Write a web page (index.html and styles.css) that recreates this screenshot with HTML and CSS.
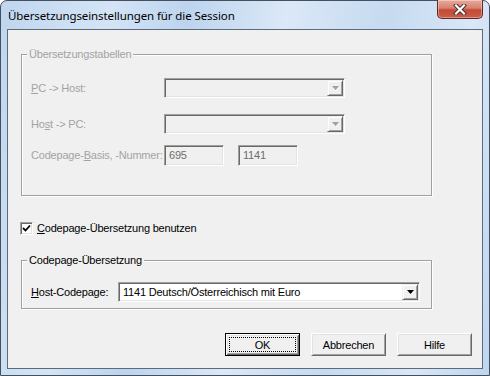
FILE: index.html
```html
<!DOCTYPE html>
<html lang="de">
<head>
    <meta charset="UTF-8">
    <meta name="viewport" content="width=device-width, initial-scale=1.0">
    <title>Übersetzungseinstellungen für die Session</title>
    <link rel="stylesheet" href="styles.css">
</head>
<body>
    <div class="window">
        <div class="titlebar">
            <span class="title">Übersetzungseinstellungen für die Session</span>
            <button class="close" aria-label="Schließen">
                <svg width="14" height="11" viewBox="0 0 14 11">
                    <path d="M3 1.5L11 9.5M11 1.5L3 9.5" stroke="#3c2b2b" stroke-width="4" stroke-linecap="square"/>
                    <path d="M3 1.5L11 9.5M11 1.5L3 9.5" stroke="#ffffff" stroke-width="2.2" stroke-linecap="square"/>
                </svg>
            </button>
        </div>

        <div class="client">
            <div class="group group-tables">
                <div class="group-title disabled">Übersetzungstabellen</div>
                <div class="row row-pc">
                    <span class="field-label disabled"><u>P</u>C -&gt; Host:</span>
                    <div class="combo combo-tables is-disabled">
                        <span class="combo-value"></span>
                        <span class="combo-button">
                            <svg width="7" height="4" viewBox="0 0 7 4"><path d="M0 0H7L3.5 4Z" fill="#a0a0a0"/></svg>
                        </span>
                    </div>
                </div>
                <div class="row row-host">
                    <span class="field-label disabled">Ho<u>s</u>t -&gt; PC:</span>
                    <div class="combo combo-tables is-disabled">
                        <span class="combo-value"></span>
                        <span class="combo-button">
                            <svg width="7" height="4" viewBox="0 0 7 4"><path d="M0 0H7L3.5 4Z" fill="#a0a0a0"/></svg>
                        </span>
                    </div>
                </div>
                <div class="row row-basis">
                    <span class="field-label disabled">Codepage-<u>B</u>asis, -Nummer:</span>
                    <span class="edit is-disabled">695</span>
                    <span class="edit edit-second is-disabled">1141</span>
                </div>
            </div>

            <div class="check-row">
                <span class="checkbox">
                    <svg width="9" height="9" viewBox="0 0 9 9"><path d="M1 4L3.5 6.5L8 1.5" fill="none" stroke="#000" stroke-width="1.8"/></svg>
                </span>
                <span><u>C</u>odepage-Übersetzung benutzen</span>
            </div>

            <div class="group group-codepage">
                <div class="group-title">Codepage-Übersetzung</div>
                <div class="row row-codepage">
                    <span class="field-label label-short"><u>H</u>ost-Codepage:</span>
                    <div class="combo combo-codepage">
                        <span class="combo-value">1141 Deutsch/Österreichisch mit Euro</span>
                        <span class="combo-button">
                            <svg width="7" height="4" viewBox="0 0 7 4"><path d="M0 0H7L3.5 4Z" fill="#000"/></svg>
                        </span>
                    </div>
                </div>
            </div>

            <div class="buttons">
                <button class="btn btn-default">OK</button>
                <button class="btn">Abbrechen</button>
                <button class="btn">Hilfe</button>
            </div>
        </div>
    </div>
</body>
</html>
```

FILE: styles.css
```css
body {
    margin: 0;
    font-family: "Liberation Sans", Arial, sans-serif;
    font-size: 11px;
    letter-spacing: -0.2px;
    background-color: #ffffff;
}
.window {
    width: 490px;
    height: 376px;
    box-sizing: border-box;
    border: 1px solid #44505e;
    border-radius: 7px 7px 0 0;
    padding: 0 6px 6px;
    background: linear-gradient(100deg, #c0d6ee 0%, #d4e4f6 20%, #bdd4ee 34%, #dbe8f7 52%, #c6daf0 70%, #d9e7f7 86%, #bfd5ee 100%);
}
.titlebar {
    height: 28px;
    display: flex;
    justify-content: space-between;
    align-items: flex-start;
}
.title {
    font-family: "Noto Sans", "Open Sans", sans-serif;
    font-size: 11.5px;
    letter-spacing: -0.1px;
    color: #000;
    padding: 7px 0 0 1px;
    line-height: 16px;
}
.close {
    width: 46px;
    height: 19px;
    margin-top: -1px;
    padding: 0;
    border: 1px solid #5d2a28;
    border-top: none;
    border-radius: 0 0 5px 5px;
    background: linear-gradient(#e9a99b 0%, #d8816f 45%, #c24a35 55%, #cc5d48 100%);
    box-shadow: inset 0 0 0 1px rgba(255, 255, 255, 0.35);
    display: flex;
    align-items: center;
    justify-content: center;
}
.client {
    height: 340px;
    box-sizing: border-box;
    border: 1px solid #5c6b7c;
    background-color: #f0f0f0;
    padding: 0 10px 0 13px;
}
.disabled {
    color: #a3a3a3;
}
u {
    text-decoration: underline;
    text-underline-offset: 1px;
}
.group {
    width: 411px;
    box-sizing: border-box;
    border: 1px solid #a0a0a0;
    box-shadow: inset 1px 1px 0 #fff, 1px 1px 0 #fff;
}
.group-tables {
    margin-top: 24px;
    height: 142px;
}
.group-codepage {
    margin-top: 25px;
    height: 49px;
}
.group-title {
    display: inline-block;
    vertical-align: top;
    margin: -7px 0 0 5px;
    padding: 0 2px;
    line-height: 13px;
    background-color: #f0f0f0;
}
.row {
    display: flex;
    align-items: center;
    padding-left: 9px;
}
.row-pc {
    margin-top: 11px;
}
.row-host {
    margin-top: 16px;
}
.row-basis {
    margin-top: 11px;
}
.row-codepage {
    margin-top: 9px;
}
.field-label {
    width: 133px;
    flex-shrink: 0;
    line-height: 13px;
    white-space: nowrap;
}
.label-short {
    width: 87px;
}
.combo,
.edit {
    box-sizing: border-box;
    height: 20px;
    border: 1px solid;
    border-color: #a0a0a0 #fff #fff #a0a0a0;
    box-shadow: inset 1px 1px 0 #696969, inset -1px -1px 0 #e3e3e3;
    background-color: #f0f0f0;
}
.combo {
    display: flex;
    align-items: center;
    padding: 1px;
}
.combo-tables {
    width: 181px;
}
.combo-codepage {
    width: 302px;
    background-color: #fff;
}
.combo-value {
    flex: 1;
    padding-left: 3px;
    line-height: 16px;
    color: #000;
    white-space: nowrap;
}
.combo-button {
    width: 16px;
    height: 16px;
    box-sizing: border-box;
    border: 1px solid;
    border-color: #f0f0f0 #696969 #696969 #f0f0f0;
    box-shadow: inset 1px 1px 0 #fff, inset -1px -1px 0 #a0a0a0;
    background-color: #f0f0f0;
    display: flex;
    align-items: center;
    justify-content: center;
}
.edit {
    width: 60px;
    height: 21px;
    padding: 0 4px;
    line-height: 19px;
    color: #6d6d6d;
}
.edit-second {
    margin-left: 14px;
}
.check-row {
    display: flex;
    align-items: center;
    margin: 26px 0 0 -1px;
    color: #000;
    line-height: 13px;
}
.checkbox {
    width: 13px;
    height: 13px;
    box-sizing: border-box;
    margin-right: 4px;
    border: 1px solid;
    border-color: #a0a0a0 #fff #fff #a0a0a0;
    box-shadow: inset 1px 1px 0 #696969, inset -1px -1px 0 #e3e3e3;
    background-color: #fff;
    display: flex;
    align-items: center;
    justify-content: center;
}
.buttons {
    display: flex;
    justify-content: flex-end;
    gap: 11px;
    margin-top: 24px;
}
.btn {
    position: relative;
    width: 75px;
    height: 23px;
    padding: 0;
    font-family: inherit;
    font-size: 11px;
    letter-spacing: -0.2px;
    color: #000;
    background-color: #f0f0f0;
    border: 1px solid;
    border-color: #fff #696969 #696969 #fff;
    box-shadow: inset 1px 1px 0 #e3e3e3, inset -1px -1px 0 #a0a0a0;
}
.btn-default {
    border: 1px solid #000;
    box-shadow: inset 1px 1px 0 #fff, inset -1px -1px 0 #696969, inset 2px 2px 0 #e3e3e3, inset -2px -2px 0 #a0a0a0;
}
.btn-default::after {
    content: "";
    position: absolute;
    top: 3px;
    left: 3px;
    right: 3px;
    bottom: 3px;
    border: 1px dotted #000;
}
```
